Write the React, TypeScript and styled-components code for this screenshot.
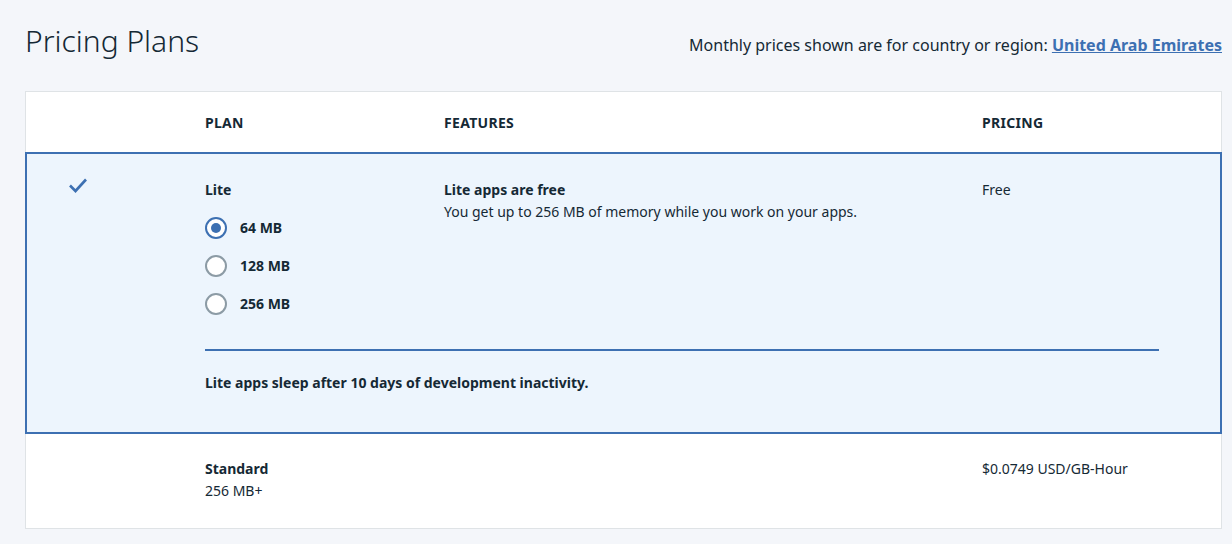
import React from "react";
import styled, { createGlobalStyle } from "styled-components";

const Global = createGlobalStyle`
  html, body { margin: 0; padding: 0; background: #f4f6fa; }
  body { font-family: "Noto Sans", "Open Sans", sans-serif; color: #152935; }
  * { box-sizing: border-box; }
`;

const Page = styled.div`
  width: 1232px;
  height: 544px;
  padding: 0 10px 0 25px;
  overflow: hidden;
`;

const TopBar = styled.div`
  display: flex;
  justify-content: space-between;
  align-items: flex-start;
  height: 91px;
`;

const Title = styled.h1`
  margin: 21px 0 0;
  font-size: 30px;
  font-weight: 300;
  line-height: 40px;
  color: #152935;
`;

const Region = styled.div`
  margin-top: 35px;
  font-size: 16px;
  line-height: 20px;
  color: #152935;
  a {
    color: #3d70b2;
    font-weight: 700;
    text-decoration: underline;
  }
`;

const Card = styled.div`
  width: 1197px;
  background: #fff;
  border: 1px solid #dfe3e6;
`;

const Grid = styled.div`
  display: grid;
  grid-template-columns: 179px 239px 538px 1fr;
`;

const HeaderRow = styled(Grid)`
  height: 60px;
  align-items: center;
  font-size: 14px;
  font-weight: 700;
  letter-spacing: 0.3px;
`;

const Row = styled.div<{ $selected?: boolean }>`
  margin: ${(p) => (p.$selected ? "0 -1px" : "0")};
  box-shadow: ${(p) => (p.$selected ? "inset 0 0 0 2px #3d70b2" : "none")};
  background: ${(p) => (p.$selected ? "#edf5fd" : "#fff")};
  padding: ${(p) => (p.$selected ? "27px 1px 40px 1px" : "24px 0 26px 0")};
`;

const CheckCell = styled.div`
  padding-left: 42px;
  margin-top: -3px;
`;

const Cell = styled.div`
  font-size: 14px;
  line-height: 22px;
`;

const Strong = styled.div`
  font-weight: 700;
  font-size: 14px;
  line-height: 22px;
`;

const Options = styled.div`
  display: flex;
  flex-direction: column;
  gap: 16px;
  margin-top: 16px;
`;

const Option = styled.label`
  display: flex;
  align-items: center;
  gap: 13px;
  font-size: 14px;
  line-height: 22px;
  font-weight: 700;
  cursor: pointer;
`;

const Radio = styled.span<{ $checked?: boolean }>`
  width: 22px;
  height: 22px;
  border-radius: 50%;
  border: 2px solid ${(p) => (p.$checked ? "#3d70b2" : "#8c9ba5")};
  background: #fff;
  display: flex;
  align-items: center;
  justify-content: center;
  &::after {
    content: "";
    width: 10px;
    height: 10px;
    border-radius: 50%;
    background: ${(p) => (p.$checked ? "#3d70b2" : "transparent")};
  }
`;

const Footer = styled.div`
  margin: 34px 62px 0 179px;
  border-top: 2px solid #3d70b2;
  padding-top: 21px;
  font-size: 14px;
  font-weight: 700;
  line-height: 22px;
`;

const Price = styled.div`
  font-size: 14px;
  line-height: 22px;
`;

const Check = () => (
  <svg width="20" height="16" viewBox="0 0 20 16" fill="none">
    <path d="M2 8.5 L7.5 14 L18 2.5" stroke="#3d70b2" strokeWidth="2.6" strokeLinecap="butt" strokeLinejoin="miter" />
  </svg>
);

export default function App() {
  return (
    <Page>
      <Global />
      <TopBar>
        <Title>Pricing Plans</Title>
        <Region>
          Monthly prices shown are for country or region: <a href="#">United Arab Emirates</a>
        </Region>
      </TopBar>
      <Card>
        <HeaderRow>
          <div />
          <div>PLAN</div>
          <div>FEATURES</div>
          <div>PRICING</div>
        </HeaderRow>
        <Row $selected>
          <Grid>
            <CheckCell>
              <Check />
            </CheckCell>
            <Cell>
              <Strong>Lite</Strong>
              <Options>
                <Option>
                  <Radio $checked />
                  64 MB
                </Option>
                <Option>
                  <Radio />
                  128 MB
                </Option>
                <Option>
                  <Radio />
                  256 MB
                </Option>
              </Options>
            </Cell>
            <Cell>
              <Strong>Lite apps are free</Strong>
              You get up to 256 MB of memory while you work on your apps.
            </Cell>
            <Price>Free</Price>
          </Grid>
          <Footer>Lite apps sleep after 10 days of development inactivity.</Footer>
        </Row>
        <Row>
          <Grid>
            <div />
            <Cell>
              <Strong>Standard</Strong>
              256 MB+
            </Cell>
            <div />
            <Price>$0.0749 USD/GB-Hour</Price>
          </Grid>
        </Row>
      </Card>
    </Page>
  );
}
